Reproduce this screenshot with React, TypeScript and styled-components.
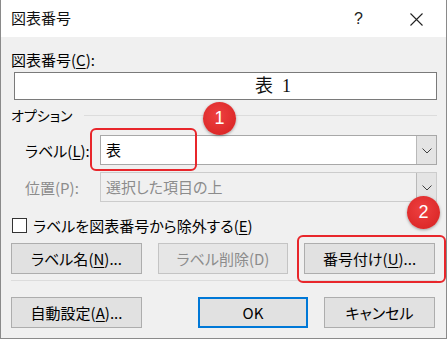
import React from 'react';
import styled, { createGlobalStyle } from 'styled-components';

const GlobalStyle = createGlobalStyle`
  html, body {
    margin: 0;
    padding: 0;
    background: #ffffff;
  }
  body {
    font-family: "Noto Sans CJK JP", "Noto Sans", sans-serif;
    font-feature-settings: "palt";
  }
`;

const Chevron: React.FC = () => (
  <svg width="10" height="6" viewBox="0 0 10 6">
    <path d="M0.5 0.5 L5 5 L9.5 0.5" fill="none" stroke="#404040" strokeWidth="1" />
  </svg>
);

const CloseIcon: React.FC = () => (
  <svg width="13" height="13" viewBox="0 0 13 13">
    <path d="M0.5 0.5 L12.5 12.5 M12.5 0.5 L0.5 12.5" stroke="#222" strokeWidth="1.1" />
  </svg>
);

const Key: React.FC<{ k: string }> = ({ k }) => (
  <>
    (<U>{k}</U>)
  </>
);

export default function App() {
  return (
    <>
      <GlobalStyle />
      <Window>
        <TitleBar>
          <Title>図表番号</Title>
          <Help>?</Help>
          <CloseBox>
            <CloseIcon />
          </CloseBox>
        </TitleBar>
        <Body>
          <FieldLabel>
            図表番号<Key k="C" />:
          </FieldLabel>
          <CaptionBox>表&nbsp;&nbsp;1</CaptionBox>

          <GroupHeader>
            <span>オプション</span>
            <GroupLine />
          </GroupHeader>

          <ComboRow $first>
            <RowLabel>
              ラベル<Key k="L" />:
            </RowLabel>
            <Combo>
              <ComboText>表</ComboText>
              <DropButton>
                <Chevron />
              </DropButton>
            </Combo>
          </ComboRow>
          <ComboRow>
            <RowLabel $disabled>位置(P):</RowLabel>
            <Combo $disabled>
              <ComboText $disabled>選択した項目の上</ComboText>
              <DropButton>
                <Chevron />
              </DropButton>
            </Combo>
          </ComboRow>

          <CheckRow>
            <CheckBox />
            <span>
              ラベルを図表番号から除外する<Key k="E" />
            </span>
          </CheckRow>

          <ButtonRow>
            <Button $w={131}>
              ラベル名<Key k="N" />...
            </Button>
            <Button $w={130} disabled>
              ラベル削除(D)
            </Button>
            <Button $w={131}>
              番号付け<Key k="U" />...
            </Button>
          </ButtonRow>

          <Separator />

          <ButtonRow $bottom>
            <Button $w={131}>
              自動設定<Key k="A" />...
            </Button>
            <Spacer />
            <Button $w={110} $primary>
              OK
            </Button>
            <Button $w={111}>キャンセル</Button>
          </ButtonRow>
        </Body>

        <Marker style={{ left: 89, top: 128, width: 107, height: 43 }} />
        <Marker style={{ left: 296, top: 235, width: 149, height: 48 }} />
        <Badge style={{ left: 202, top: 102 }}>1</Badge>
        <Badge style={{ left: 406, top: 196 }}>2</Badge>
      </Window>
    </>
  );
}

const Window = styled.div`
  position: relative;
  width: 447px;
  height: 339px;
  box-sizing: border-box;
  border-left: 1px solid #8a8a8a;
  border-right: 1px solid #8a8a8a;
  border-bottom: 1px solid #8a8a8a;
  background: #f0f0f0;
  color: #000;
  font-size: 15px;
  overflow: hidden;
`;

const TitleBar = styled.div`
  display: flex;
  align-items: center;
  height: 37px;
  background: #ffffff;
  padding-left: 10px;
  padding-right: 23px;
`;

const Title = styled.div`
  flex: 1;
  font-size: 15px;
  color: #111;
  padding-bottom: 2px;
`;

const Help = styled.div`
  font-family: "Liberation Sans", sans-serif;
  font-size: 16px;
  color: #222;
  margin-right: 47px;
`;

const CloseBox = styled.div`
  display: flex;
  align-items: center;
  padding-top: 1px;
`;

const Body = styled.div`
  display: flex;
  flex-direction: column;
  padding: 12px 9px 0 10px;
`;

const U = styled.span`
  text-decoration: underline;
  text-underline-offset: 2px;
`;

const FieldLabel = styled.div`
  height: 22px;
  line-height: 22px;
`;

const CaptionBox = styled.div`
  margin: 1px 0 0 3px;
  height: 28px;
  box-sizing: border-box;
  border: 1px solid #7a7a7a;
  background: #fff;
  padding-left: 240px;
  font-family: "Liberation Serif", "Noto Sans CJK JP", serif;
  font-feature-settings: normal;
  font-size: 18px;
  line-height: 26px;
  color: #111;
`;

const GroupHeader = styled.div`
  display: flex;
  align-items: center;
  gap: 7px;
  margin-top: 5px;
  height: 20px;
  font-size: 14px;
`;

const GroupLine = styled.div`
  flex: 1;
  height: 1px;
  background: #dcdcdc;
  margin-left: 4px;
  margin-top: 1px;
`;

const ComboRow = styled.div<{ $first?: boolean }>`
  display: flex;
  align-items: center;
  margin-top: ${(p) => (p.$first ? '10px' : '7px')};
  padding-left: 14px;
`;

const RowLabel = styled.div<{ $disabled?: boolean }>`
  width: 75px;
  color: ${(p) => (p.$disabled ? '#8c8c8c' : '#000')};
`;

const Combo = styled.div<{ $disabled?: boolean }>`
  flex: 1;
  display: flex;
  height: 30px;
  box-sizing: border-box;
  border: 1px solid ${(p) => (p.$disabled ? '#cccccc' : '#a8a8a8')};
  background: ${(p) => (p.$disabled ? '#f0f0f0' : '#ffffff')};
`;

const ComboText = styled.div<{ $disabled?: boolean }>`
  flex: 1;
  padding-left: 5px;
  line-height: 28px;
  color: ${(p) => (p.$disabled ? '#8c8c8c' : '#000')};
`;

const DropButton = styled.div`
  width: 19px;
  display: flex;
  align-items: center;
  justify-content: center;
  background: #e4e4e4;
  border-left: 1px solid #b9b9b9;
  padding-top: 1px;
`;

const CheckRow = styled.div`
  display: flex;
  align-items: center;
  gap: 6px;
  margin-top: 13px;
  height: 20px;
`;

const CheckBox = styled.div`
  width: 15px;
  height: 15px;
  box-sizing: border-box;
  border: 1px solid #333;
  background: #fff;
  margin-left: 1px;
`;

const ButtonRow = styled.div<{ $bottom?: boolean }>`
  display: flex;
  gap: 16px;
  margin-top: ${(p) => (p.$bottom ? '16px' : '8px')};
  padding-right: 2px;
`;

const Spacer = styled.div`
  flex: 1;
`;

const Button = styled.button<{ $primary?: boolean; $w: number }>`
  flex-shrink: 0;
  width: ${(p) => p.$w}px;
  height: 31px;
  box-sizing: border-box;
  border: ${(p) => (p.$primary ? '2px solid #0078d7' : '1px solid #adadad')};
  background: #e1e1e1;
  font-family: "Noto Sans CJK JP", "Noto Sans", sans-serif;
  font-feature-settings: "palt";
  font-size: 15px;
  color: #000;
  padding: 0;
  &:disabled {
    background: #e6e6e6;
    border-color: #c4c4c4;
    color: #8c8c8c;
  }
`;

const Separator = styled.div`
  height: 1px;
  background: #dcdcdc;
  margin-top: 6px;
`;

const Marker = styled.div`
  position: absolute;
  box-sizing: border-box;
  border: 2px solid #e8262b;
  border-radius: 6px;
  pointer-events: none;
`;

const Badge = styled.div`
  position: absolute;
  width: 33px;
  height: 33px;
  border-radius: 50%;
  background: radial-gradient(circle at 45% 40%, #ee4040 0%, #dd2a2a 70%, #c81e1e 100%);
  box-shadow: 0 1px 3px rgba(0, 0, 0, 0.35);
  color: #fff;
  font-family: "Liberation Sans", sans-serif;
  font-size: 18px;
  display: flex;
  align-items: center;
  justify-content: center;
`;
